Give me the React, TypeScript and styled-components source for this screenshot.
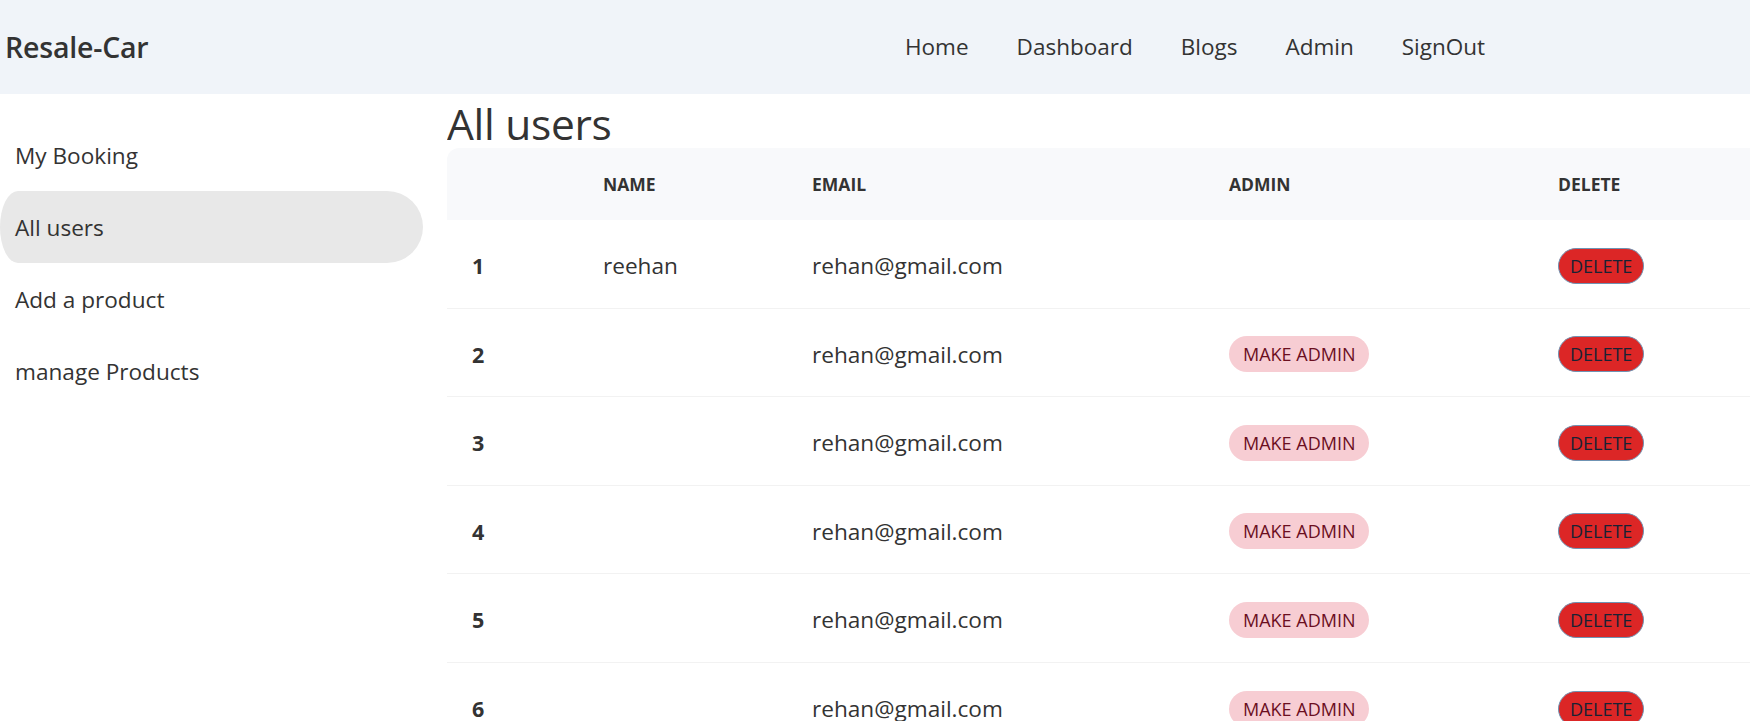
import React from "react";
import styled, { createGlobalStyle } from "styled-components";

const GlobalStyle = createGlobalStyle`
  html, body {
    margin: 0;
    padding: 0;
    overflow: hidden;
    background: #ffffff;
    color: #333333;
    font-family: "Open Sans", "Noto Sans", Arial, sans-serif;
  }
  * { box-sizing: border-box; }
`;

const Page = styled.div`
  display: flex;
  flex-direction: column;
  width: 1750px;
  height: 721px;
  overflow: hidden;
`;

const Header = styled.header`
  display: flex;
  align-items: center;
  height: 94px;
  background: #f0f4f9;
  flex-shrink: 0;
`;

const BrandBox = styled.div`
  width: 50%;
  padding-left: 5px;
`;

const Brand = styled.a`
  font-size: 28.5px;
  font-weight: 600;
  color: #333333;
  text-decoration: none;
  letter-spacing: -0.2px;
`;

const NavList = styled.ul`
  display: flex;
  list-style: none;
  margin: 0;
  padding: 0 6px;
`;

const NavItem = styled.li`
  padding: 0 24px;
  font-size: 22.5px;
  color: #333333;
  line-height: 40px;
`;

const Body = styled.div`
  display: flex;
  gap: 24px;
  flex: 1;
  min-height: 0;
`;

const Sidebar = styled.ul`
  width: 423px;
  flex-shrink: 0;
  list-style: none;
  margin: 0;
  padding: 25px 0 0 0;
`;

const SideItem = styled.li<{ $active?: boolean }>`
  height: 72px;
  display: flex;
  align-items: center;
  padding-left: 15px;
  font-size: 22.6px;
  color: #333333;
  background: ${(p) => (p.$active ? "#e8e8e8" : "transparent")};
  border-radius: ${(p) => (p.$active ? "0 36px 36px 0" : "0")};
  ${(p) => (p.$active ? "border-top-left-radius: 18px 36px; border-bottom-left-radius: 18px 36px;" : "")}
`;

const Main = styled.main`
  flex: 1;
  min-width: 0;
  overflow: hidden;
`;

const Title = styled.h1`
  margin: 6px 0 0 0;
  font-size: 42.5px;
  font-weight: 400;
  line-height: 48px;
  color: #333333;
  letter-spacing: -0.3px;
`;

const Table = styled.table`
  width: calc(100% + 40px);
  border-collapse: separate;
  border-spacing: 0;
  table-layout: fixed;
`;

const HeadCell = styled.th`
  height: 72px;
  padding: 0 0 0 25px;
  text-align: left;
  font-size: 17.5px;
  font-weight: 700;
  text-transform: uppercase;
  color: #333333;
  background: #f8f9fb;
  &:first-child { border-top-left-radius: 12px; }
`;

const Row = styled.tr`
  &:not(:last-child) td { border-bottom: 1px solid #f2f2f2; }
`;

const Cell = styled.td<{ $bold?: boolean }>`
  height: 88.5px;
  padding: 4px 0 0 25px;
  font-size: ${(p) => (p.$bold ? "21.5px" : "22.6px")};
  font-weight: ${(p) => (p.$bold ? 700 : 400)};
  color: #333333;
  vertical-align: middle;
  white-space: nowrap;
`;

const Pill = styled.button<{ $variant: "admin" | "delete" }>`
  height: 36px;
  border-radius: 999px;
  font-family: inherit;
  font-size: 18px;
  text-transform: uppercase;
  cursor: pointer;
  display: inline-flex;
  align-items: center;
  ${(p) =>
    p.$variant === "admin"
      ? `
    background: #f7cdd3;
    color: #6b0f1f;
    border: none;
    padding: 0 14px;
  `
      : `
    background: #dc2626;
    color: #172234;
    border: 1px solid #6f93b3;
    padding: 0 11px;
  `}
`;

type User = { id: number; name: string; email: string; admin: boolean };

const users: User[] = [
  { id: 1, name: "reehan", email: "rehan@gmail.com", admin: true },
  { id: 2, name: "", email: "rehan@gmail.com", admin: false },
  { id: 3, name: "", email: "rehan@gmail.com", admin: false },
  { id: 4, name: "", email: "rehan@gmail.com", admin: false },
  { id: 5, name: "", email: "rehan@gmail.com", admin: false },
  { id: 6, name: "", email: "rehan@gmail.com", admin: false },
];

const navLinks = ["Home", "Dashboard", "Blogs", "Admin", "SignOut"];
const sideLinks = ["My Booking", "All users", "Add a product", "manage Products"];

export default function App() {
  return (
    <>
      <GlobalStyle />
      <Page>
        <Header>
          <BrandBox>
            <Brand href="#">Resale-Car</Brand>
          </BrandBox>
          <NavList>
            {navLinks.map((l) => (
              <NavItem key={l}>{l}</NavItem>
            ))}
          </NavList>
        </Header>
        <Body>
          <Sidebar>
            {sideLinks.map((l) => (
              <SideItem key={l} $active={l === "All users"}>
                {l}
              </SideItem>
            ))}
          </Sidebar>
          <Main>
            <Title>All users</Title>
            <Table>
              <colgroup>
                <col style={{ width: 131 }} />
                <col style={{ width: 209 }} />
                <col style={{ width: 417 }} />
                <col style={{ width: 329 }} />
                <col />
              </colgroup>
              <thead>
                <tr>
                  <HeadCell></HeadCell>
                  <HeadCell>Name</HeadCell>
                  <HeadCell>Email</HeadCell>
                  <HeadCell>Admin</HeadCell>
                  <HeadCell>Delete</HeadCell>
                </tr>
              </thead>
              <tbody>
                {users.map((u) => (
                  <Row key={u.id}>
                    <Cell $bold>{u.id}</Cell>
                    <Cell>{u.name}</Cell>
                    <Cell>{u.email}</Cell>
                    <Cell>{!u.admin && <Pill $variant="admin">Make Admin</Pill>}</Cell>
                    <Cell>
                      <Pill $variant="delete">Delete</Pill>
                    </Cell>
                  </Row>
                ))}
              </tbody>
            </Table>
          </Main>
        </Body>
      </Page>
    </>
  );
}
